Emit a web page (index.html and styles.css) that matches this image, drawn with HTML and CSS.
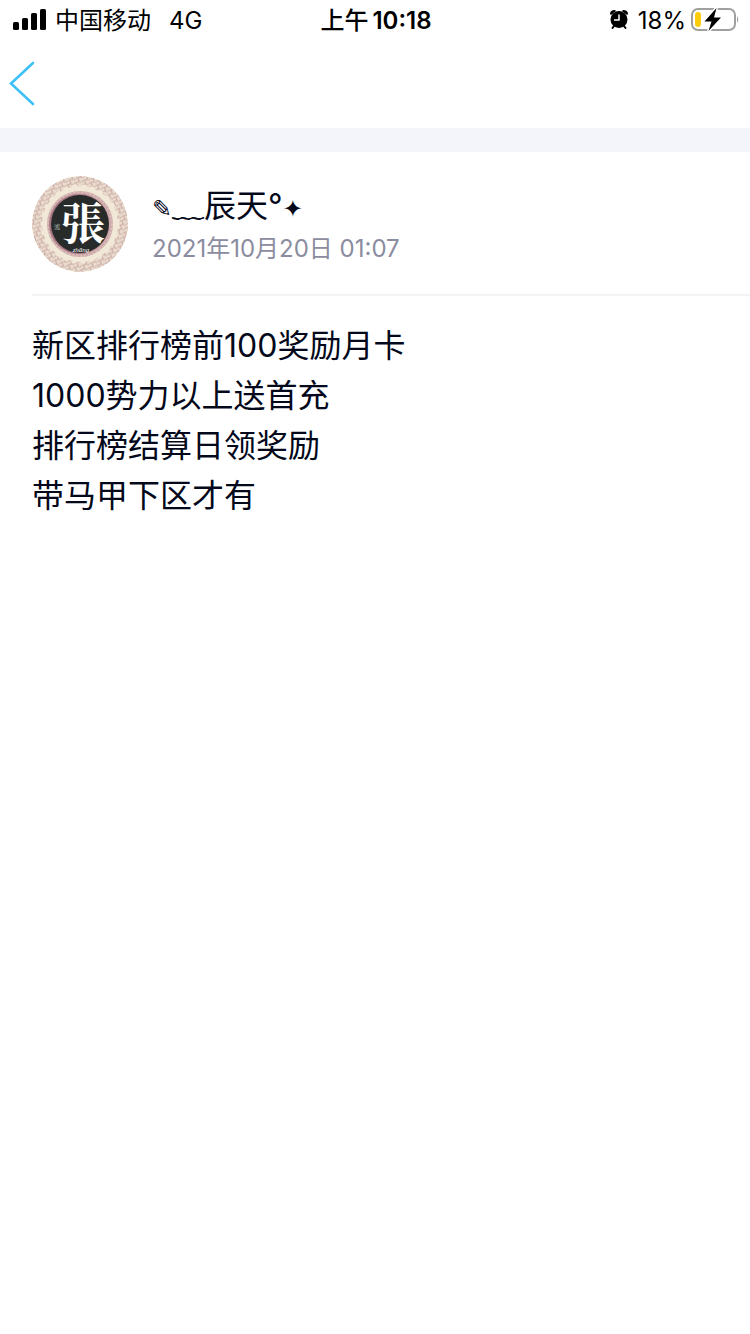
FILE: index.html
```html
<!DOCTYPE html>
<html lang="zh-CN">
<head>
    <meta charset="UTF-8">
    <meta name="viewport" content="width=device-width, initial-scale=1.0">
    <title>公告</title>
    <link rel="stylesheet" href="styles.css">
</head>
<body>

    <div class="status-bar">
        <div class="status-left">
            <svg class="signal" width="34" height="22" viewBox="0 0 34 22" aria-hidden="true">
                <rect x="0" y="13" width="6" height="8" rx="1.5"/>
                <rect x="9" y="9" width="6" height="12" rx="1.5"/>
                <rect x="18" y="4" width="6" height="17" rx="1.5"/>
                <rect x="27" y="0" width="6" height="21" rx="1.5"/>
            </svg>
            <span class="carrier">中国移动</span>
            <span>4G</span>
        </div>
        <div class="status-time"><span>上午</span><span>10:18</span></div>
        <div class="status-right">
            <svg width="20" height="22" viewBox="0 0 20 22" aria-hidden="true">
                <path d="M5 17 3.500 19M15 17l1.500 2" stroke="#000" stroke-width="2" stroke-linecap="round"/>
                <path d="M1 5Q1 1 6 1L7 2 2 6zM19 5Q19 1 14 1L13 2 18 6z"/>
                <circle cx="10" cy="10.500" r="8.500"/>
                <path d="M10 5.500V11H5" fill="none" stroke="#fff" stroke-width="1.500"/>
            </svg>
            <span class="percent">18%</span>
            <svg width="48" height="26" viewBox="0 0 48 26" aria-hidden="true">
                <rect x="1" y="2" width="43" height="21" rx="6" fill="none" stroke="#a0a0a0" stroke-width="2"/>
                <path d="M46 9q2.500 3.500 0 7z" fill="#a0a0a0"/>
                <rect x="4" y="5" width="6" height="15" rx="3" fill="#fdcc0c"/>
                <path d="M25.500 1 13.500 14.500h7L17.500 24 30 10.500h-7z" stroke="#fff" stroke-width="3"/>
                <path d="M25.500 1 13.500 14.500h7L17.500 24 30 10.500h-7z"/>
            </svg>
        </div>
    </div>

    <nav class="nav-bar">
        <button class="back-btn" type="button" aria-label="返回">
            <svg width="28" height="46" viewBox="0 0 28 46" aria-hidden="true">
                <path d="M25 2 3 22.500 25 43" fill="none" stroke="#3fc0f7" stroke-width="2.600" stroke-linecap="round"/>
            </svg>
        </button>
    </nav>

    <main class="notice">
        <header class="author">
            <svg class="avatar" width="96" height="96" viewBox="0 0 96 96" aria-hidden="true">
                <defs>
                    <!-- 花纹外圈 -->
                    <pattern id="lace" width="7" height="5" patternUnits="userSpaceOnUse" patternTransform="rotate(20)">
                        <path d="M0 3q1.500-4 3.500 0t3.500 0M3 0q-2 1.500 0 2.500t0 2.500" fill="none" stroke="#c9a9a2" stroke-width="1"/>
                    </pattern>
                </defs>
                <circle cx="48" cy="48" r="48" fill="#e9dacd"/>
                <circle cx="48" cy="48" r="48" fill="url(#lace)"/>
                <circle cx="48" cy="48" r="38" fill="#f1e8d8"/>
                <circle cx="48" cy="48" r="38" fill="none" stroke="#f1e8d8" stroke-width="3" stroke-dasharray="5 4"/>
                <circle cx="48" cy="48" r="33" fill="#cfaaac"/>
                <circle cx="48" cy="48" r="32" fill="none" stroke="#dbbfba" stroke-width="2" stroke-dasharray="2 2"/>
                <circle cx="47" cy="48" r="30" fill="#a87984"/>
                <circle cx="48" cy="48" r="29" fill="#272b2a"/>
                <text class="avatar-char" x="51" y="64" text-anchor="middle">張</text>
                <text class="avatar-mark" x="25" y="53" text-anchor="middle">鴻</text>
                <text class="avatar-sign" x="49" y="76" text-anchor="middle">zhāng</text>
            </svg>
            <div class="author-info">
                <h1 class="author-name"><span class="symbol">✎</span>﹏辰天°<span class="symbol">✦</span></h1>
                <time class="author-time" datetime="2021-10-20T01:07">2021年10月20日 01:07</time>
            </div>
        </header>
        <div class="content">
            <p>新区排行榜前100奖励月卡</p>
            <p>1000势力以上送首充</p>
            <p>排行榜结算日领奖励</p>
            <p>带马甲下区才有</p>
        </div>
    </main>

</body>
</html>
```
FILE: styles.css
```css
* {
    margin: 0;
    padding: 0;
    box-sizing: border-box;
}

body {
    font-family: Inter, "Noto Sans CJK SC", sans-serif;
    background: #fff;
    color: #03081a;
}

svg {
    display: block;
    flex: none;
}

/* 状态栏 */
.status-bar {
    display: grid;
    grid-template-columns: 1fr auto 1fr;
    align-items: center;
    height: 40px;
    padding: 0 11px 0 13px;
    font-size: 24px;
    line-height: 38px;
    color: #000;
}

.status-left,
.status-right {
    display: flex;
    align-items: center;
}

.status-right {
    justify-content: flex-end;
}

.status-bar span {
    padding-top: 2px;
}

.carrier {
    margin: 0 18px 0 8px;
}

.status-time {
    display: flex;
    gap: 4px;
    font-weight: 600;
}

.status-time span:first-child {
    font-weight: 500;
}

.percent {
    margin: 0 5px 0 9px;
}

/* 导航栏 */
.nav-bar {
    display: flex;
    align-items: center;
    height: 88px;
    padding-left: 8px;
}

.back-btn {
    background: none;
    border: none;
    cursor: pointer;
}

/* 公告内容 */
.notice {
    border-top: 24px solid #f4f5fa;
    padding-left: 32px;
}

.author {
    display: flex;
    gap: 24px;
    padding: 24px 0 22px;
    border-bottom: 2px solid #f3f4f5;
}

.avatar {
    border-radius: 50%;
}

.avatar-char {
    font-family: "Noto Serif CJK TC", "Noto Sans CJK TC", serif;
    font-size: 44px;
    font-weight: 700;
    fill: #fff;
}

.avatar-mark {
    font-family: "Noto Sans CJK TC", sans-serif;
    font-size: 6px;
    fill: #b5c0bd;
}

.avatar-sign {
    font-family: "Liberation Serif", serif;
    font-size: 7px;
    font-style: italic;
    fill: #fff;
}

.author-info {
    display: flex;
    flex-direction: column;
    padding-top: 8px;
}

.author-name {
    font-size: 32px;
    font-weight: 400;
    line-height: 44px;
}

.symbol {
    font-family: "DejaVu Sans", sans-serif;
    font-size: 24px;
}

.author-time {
    font-size: 24px;
    line-height: 36px;
    color: #8b8c9f;
}

.content {
    padding: 25px 32px 25px 0;
    font-size: 32px;
    line-height: 50px;
}
```
